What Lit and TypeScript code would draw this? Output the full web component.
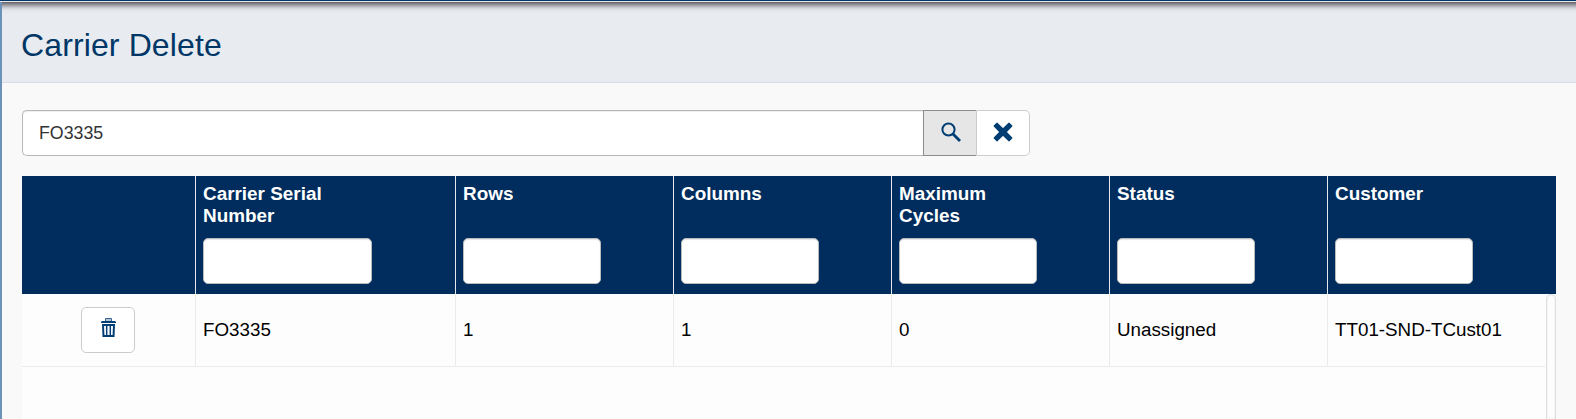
import { LitElement, html, css } from "lit";
import { customElement } from "lit/decorators.js";

interface Column {
  label: string;
  value: string;
}

const columns: Column[] = [
  { label: "Carrier Serial Number", value: "FO3335" },
  { label: "Rows", value: "1" },
  { label: "Columns", value: "1" },
  { label: "Maximum Cycles", value: "0" },
  { label: "Status", value: "Unassigned" },
  { label: "Customer", value: "TT01-SND-TCust01" },
];

@customElement("carrier-grid")
class CarrierGrid extends LitElement {
  static styles = css`
    :host {
      display: flex;
      flex-direction: column;
      flex: 1;
      background: #fdfdfd;
      font-size: 18.8px;
      line-height: 22px;
      color: #000;
    }
    * { box-sizing: border-box; }
    .head, .row {
      display: grid;
      grid-template-columns: 173px 260px 218px 218px 218px 218px 1fr;
    }
    .head {
      height: 118px;
      background: #002d5d;
      color: #fff;
      font-size: 18.9px;
      font-weight: bold;
    }
    .th {
      display: flex;
      flex-direction: column;
      justify-content: space-between;
      padding: 7px 0 10px 7px;
      border-left: 1px solid #e4e7ec;
    }
    .label { max-width: 130px; }
    .filter {
      flex: none;
      width: 138px;
      height: 46px;
      margin: 0;
      border: 1px solid #b9bbbd;
      border-radius: 5px;
      background: #fff;
      box-shadow: inset 0 1px 1px rgba(0, 0, 0, 0.1);
    }
    .th.wide .filter { width: 169px; }
    .body { display: flex; flex: 1; }
    .rows { width: 1523px; }
    .row { height: 73px; border-bottom: 1px solid #ebebeb; }
    .td {
      display: flex;
      align-items: center;
      padding-left: 7px;
      border-left: 1px solid #ebebeb;
      white-space: nowrap;
    }
    .act {
      display: flex;
      align-items: center;
      justify-content: center;
      padding-right: 1px;
    }
    .trash {
      display: flex;
      align-items: center;
      justify-content: center;
      width: 54px;
      height: 46px;
      padding: 0;
      border: 1px solid #ccc;
      border-radius: 5px;
      background: #fff;
    }
    .trash svg { display: block; margin: 0 0 5px 1px; }
    .scroll {
      width: 10px;
      margin-left: 1px;
      border: 1px solid #dedfe1;
      border-bottom: 0;
      border-radius: 5px 5px 0 0;
      box-shadow: inset 0 0 2px rgba(0, 0, 0, 0.12);
    }
  `;
  render() {
    return html`
      <div class="head">
        <div></div>
        ${columns.map(
          (c, i) => html`<div class="th ${i === 0 ? "wide" : ""}">
            <span class="label">${c.label}</span>
            <input class="filter" aria-label=${c.label} />
          </div>`
        )}
      </div>
      <div class="body">
        <div class="rows">
          <div class="row">
            <div class="act">
              <button class="trash" aria-label="Delete">
                <svg width="15" height="19" viewBox="0 0 15 19">
                  <path d="M4.5 3V.5H10.5V3" fill="#b3c3d4" stroke="#3a6690" stroke-width="1" />
                  <path d="M1 3H14L15 4V5H0V4Z" fill="#003d73" />
                  <path d="M1 6H14L13.5 19H1.5Z" fill="#003d73" />
                  <path d="M3 8H5V17H3.4ZM6.4 8H8.6V17H6.4ZM10 8H12L11.6 17H10Z" fill="#f4f7fa" />
                </svg>
              </button>
            </div>
            ${columns.map((c) => html`<div class="td">${c.value}</div>`)}
          </div>
        </div>
        <div class="scroll"></div>
      </div>
    `;
  }
}

@customElement("app-root")
class AppRoot extends LitElement {
  static styles = css`
    :host {
      display: flex;
      flex-direction: column;
      height: 419px;
      overflow: hidden;
      font-family: "Liberation Sans", Arial, sans-serif;
      background: #f9f9f9;
    }
    * { box-sizing: border-box; }
    .bar { height: 2px; background: #003767; border-bottom: 1px solid #e5e9ee; }
    .page {
      flex: 1;
      display: flex;
      flex-direction: column;
      border-left: 2px solid #6b93ba;
    }
    .title {
      height: 81px;
      padding: 0 0 0 19px;
      border-bottom: 1px solid #d9dcea;
      background: linear-gradient(#5f5d64, #76757c 1px, #98989f 3px, #bfc1c7 5px, #d9dce1 7px, #e4e7ec 9px, #e8ebf0 12px);
    }
    h1 {
      margin: 0;
      padding-top: 25px;
      font-size: 32px;
      line-height: 36px;
      letter-spacing: 0.12px;
      font-weight: normal;
      color: #003767;
    }
    .content {
      flex: 1;
      display: flex;
      flex-direction: column;
      gap: 20px;
      padding: 27px 20px 0 20px;
    }
    .search { display: flex; width: 1008px; height: 46px; }
    .query {
      flex: 1;
      margin: 0;
      padding: 0 16px;
      border: 1px solid #b5b7ba;
      border-right: 0;
      border-radius: 5px 0 0 5px;
      background: #fff;
      box-shadow: inset 0 1px 1px rgba(0, 0, 0, 0.075);
      font: 17.8px "Liberation Sans", Arial, sans-serif;
      color: #333;
    }
    .btn {
      display: flex;
      align-items: center;
      justify-content: center;
      width: 53px;
      padding: 0;
      border: 1px solid #8c8c8c;
      border-right: 0;
      background: #e6e6e6;
    }
    .btn.clear {
      width: 54px;
      border: 1px solid #ccc;
      border-radius: 0 5px 5px 0;
      background: #fff;
    }
    .btn svg { display: block; margin: 0 0 3px 1px; }
    .btn.clear svg { margin-left: 0; }
  `;
  render() {
    return html`
      <div class="bar"></div>
      <div class="page">
        <div class="title"><h1>Carrier Delete</h1></div>
        <div class="content">
          <div class="search">
            <input class="query" aria-label="Search" value="FO3335" />
            <button class="btn" aria-label="Search">
              <svg width="20" height="20" viewBox="0 0 20 20" fill="none" stroke="#003d73">
                <circle cx="7.5" cy="7.5" r="6.1" stroke-width="2" />
                <path d="M12 12L19 19" stroke-width="2.8" />
              </svg>
            </button>
            <button class="btn clear" aria-label="Clear">
              <svg width="20" height="20" viewBox="0 0 20 20">
                <path
                  d="M4 1.2L10 7L16 1.2L18.8 4L13 10L18.8 16L16 18.8L10 13L4 18.8L1.2 16L7 10L1.2 4Z"
                  fill="#003d73"
                  stroke="#003d73"
                  stroke-width="1.2"
                  stroke-linejoin="round"
                />
              </svg>
            </button>
          </div>
          <carrier-grid></carrier-grid>
        </div>
      </div>
    `;
  }
}
